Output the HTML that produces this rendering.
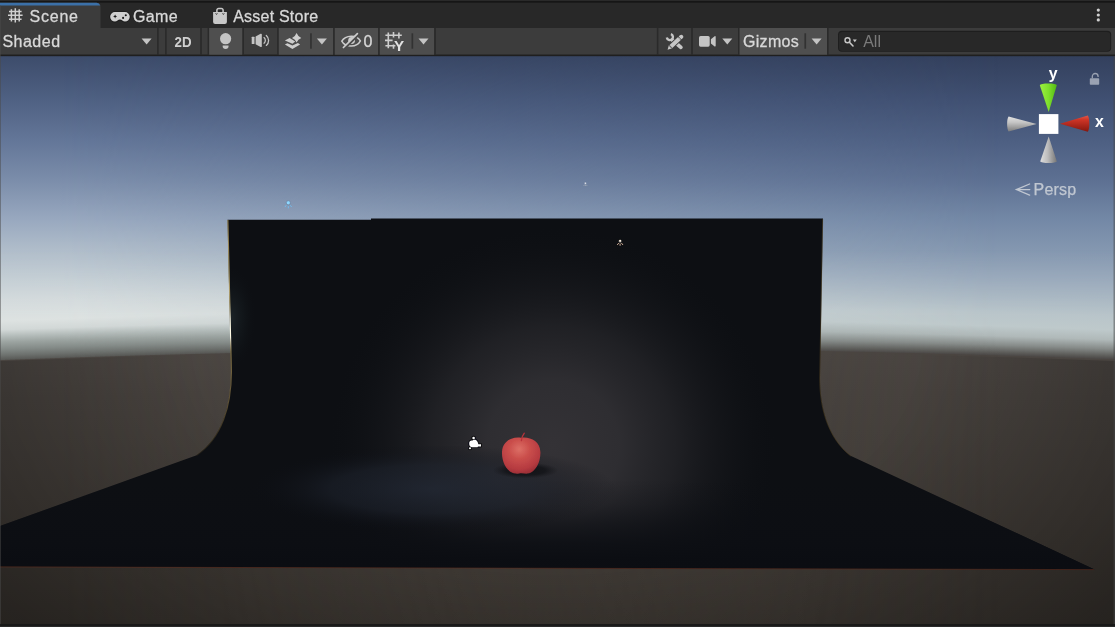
<!DOCTYPE html>
<html><head><meta charset="utf-8">
<style>
html,body{margin:0;padding:0;background:#282828;}
body{width:1115px;height:627px;overflow:hidden;position:relative;font-family:"Liberation Sans",sans-serif;}
</style></head>
<body>
<svg width="1115" height="627" viewBox="0 0 1115 627" style="position:absolute;left:0;top:0;will-change:transform">
<defs>
<linearGradient id="skyL" x1="0" y1="0" x2="0" y2="700" gradientUnits="userSpaceOnUse"><stop offset="0.0571" stop-color="#394866"/><stop offset="0.0800" stop-color="#3d4c6b"/><stop offset="0.1429" stop-color="#4f6183"/><stop offset="0.2000" stop-color="#637698"/><stop offset="0.2571" stop-color="#7b8daa"/><stop offset="0.3129" stop-color="#98a8bf"/><stop offset="0.3571" stop-color="#b0bdca"/><stop offset="0.4000" stop-color="#c5cfd5"/><stop offset="0.4286" stop-color="#d3dadc"/><stop offset="0.4586" stop-color="#dde2e1"/><stop offset="0.4714" stop-color="#d2d8d7"/><stop offset="0.4806" stop-color="#b4bcba"/><stop offset="0.4891" stop-color="#9ba3a0"/><stop offset="0.4991" stop-color="#848b88"/><stop offset="0.5077" stop-color="#6d716e"/><stop offset="0.5137" stop-color="#5a5b58"/><stop offset="0.5151" stop-color="#4b4642"/><stop offset="0.5714" stop-color="#47423e"/><stop offset="0.8143" stop-color="#3e3934"/><stop offset="0.8957" stop-color="#3b3631"/><stop offset="1.0000" stop-color="#37322d"/></linearGradient>
<linearGradient id="skyR" x1="0" y1="0" x2="0" y2="700" gradientUnits="userSpaceOnUse"><stop offset="0.0571" stop-color="#2f3b57"/><stop offset="0.0800" stop-color="#33405d"/><stop offset="0.1429" stop-color="#405072"/><stop offset="0.2000" stop-color="#4d5f82"/><stop offset="0.2571" stop-color="#5d7092"/><stop offset="0.3129" stop-color="#7388a6"/><stop offset="0.3571" stop-color="#8497b0"/><stop offset="0.4000" stop-color="#9aaabc"/><stop offset="0.4286" stop-color="#aab8c3"/><stop offset="0.4543" stop-color="#b9c5ca"/><stop offset="0.4729" stop-color="#bec9cb"/><stop offset="0.4871" stop-color="#b0b9b9"/><stop offset="0.5000" stop-color="#878c8a"/><stop offset="0.5100" stop-color="#5e5e5b"/><stop offset="0.5143" stop-color="#4d4a48"/><stop offset="0.5154" stop-color="#4a4541"/><stop offset="0.5714" stop-color="#47423e"/><stop offset="0.8143" stop-color="#3e3934"/><stop offset="0.8957" stop-color="#3b3631"/><stop offset="1.0000" stop-color="#37322d"/></linearGradient>
<linearGradient id="mk" x1="60" y1="0" x2="1000" y2="0" gradientUnits="userSpaceOnUse"><stop offset="0" stop-color="#fff"/><stop offset="1" stop-color="#000"/></linearGradient>
<linearGradient id="vmk" x1="0" y1="250" x2="0" y2="315" gradientUnits="userSpaceOnUse"><stop offset="0" stop-color="#000"/><stop offset="1" stop-color="#fff"/></linearGradient>
<mask id="vm" maskUnits="userSpaceOnUse" x="0" y="0" width="1115" height="700"><rect x="0" y="0" width="1115" height="700" fill="url(#vmk)"/></mask>
<mask id="lm" maskUnits="userSpaceOnUse" x="0" y="0" width="1115" height="700"><rect x="0" y="0" width="1115" height="700" fill="url(#mk)"/></mask>
<radialGradient id="gd" cx="0" cy="0" r="1.3" gradientUnits="userSpaceOnUse" gradientTransform="translate(557 340) scale(700 430)"><stop offset="0.4" stop-color="#000" stop-opacity="0"/><stop offset="0.54" stop-color="#000" stop-opacity="0.12"/><stop offset="0.69" stop-color="#000" stop-opacity="0.26"/><stop offset="0.77" stop-color="#000" stop-opacity="0.34"/><stop offset="1" stop-color="#000" stop-opacity="0.45"/></radialGradient>
<radialGradient id="wallglow" cx="0" cy="0" r="1" gradientUnits="userSpaceOnUse" gradientTransform="translate(553 446) scale(222 218)">
<stop offset="0" stop-color="#343236" stop-opacity="1"/><stop offset="0.3" stop-color="#302f33" stop-opacity="0.95"/><stop offset="0.55" stop-color="#27272b" stop-opacity="0.72"/><stop offset="0.8" stop-color="#1b1c20" stop-opacity="0.32"/><stop offset="1" stop-color="#101216" stop-opacity="0"/></radialGradient>
<radialGradient id="floorglow" cx="0" cy="0" r="1" gradientUnits="userSpaceOnUse" gradientTransform="translate(432 489) scale(185 44)">
<stop offset="0" stop-color="#222834" stop-opacity="0.8"/><stop offset="0.55" stop-color="#1d222c" stop-opacity="0.6"/><stop offset="1" stop-color="#0c0e14" stop-opacity="0"/></radialGradient>
<linearGradient id="fdark" x1="0" y1="480" x2="0" y2="560" gradientUnits="userSpaceOnUse"><stop offset="0" stop-color="#0c0e13" stop-opacity="0"/><stop offset="0.3" stop-color="#0c0e13" stop-opacity="0.25"/><stop offset="0.55" stop-color="#0c0e13" stop-opacity="0.6"/><stop offset="0.8" stop-color="#0c0e13" stop-opacity="0.88"/><stop offset="1" stop-color="#0b0d12" stop-opacity="0.97"/></linearGradient>
<linearGradient id="rimL" x1="0" y1="219" x2="0" y2="456" gradientUnits="userSpaceOnUse"><stop offset="0" stop-color="#b09858" stop-opacity="0.75"/><stop offset="0.35" stop-color="#c8b478" stop-opacity="0.85"/><stop offset="0.42" stop-color="#fffbe6" stop-opacity="1"/><stop offset="0.5" stop-color="#fffbe6" stop-opacity="1"/><stop offset="0.56" stop-color="#a89258" stop-opacity="0.8"/><stop offset="0.8" stop-color="#8a7444" stop-opacity="0.55"/><stop offset="1" stop-color="#6a5428" stop-opacity="0.2"/></linearGradient>
<radialGradient id="rimglow" cx="0.5" cy="0.5" r="0.5"><stop offset="0" stop-color="#222b2f" stop-opacity="0.7"/><stop offset="0.5" stop-color="#182024" stop-opacity="0.35"/><stop offset="1" stop-color="#0c0e12" stop-opacity="0"/></radialGradient>
<clipPath id="bd"><path d="M227.5 219.7 H371 V218.5 H823 L820 378 C820 408 828 438 851 456 L1094.6 569.4 L0 566.6 L0 526 L196 455.5 C222 438 231 405 231 372 Z"/></clipPath>
<clipPath id="sc"><rect x="0" y="56" width="1115" height="571"/></clipPath>
<linearGradient id="cg" x1="0" y1="0" x2="1" y2="0"><stop offset="0" stop-color="#9cf040"/><stop offset="0.5" stop-color="#7fe02c"/><stop offset="1" stop-color="#52b814"/></linearGradient>
<linearGradient id="cr" x1="0" y1="0" x2="0" y2="1"><stop offset="0" stop-color="#e0584a"/><stop offset="0.25" stop-color="#cf3527"/><stop offset="1" stop-color="#84170e"/></linearGradient>
<linearGradient id="cgl" x1="0" y1="0" x2="0" y2="1"><stop offset="0" stop-color="#e2e2e2"/><stop offset="0.4" stop-color="#c4c4c4"/><stop offset="1" stop-color="#7c7c7c"/></linearGradient>
<linearGradient id="cgb" x1="0" y1="0" x2="1" y2="0"><stop offset="0" stop-color="#dedede"/><stop offset="0.45" stop-color="#bcbcbc"/><stop offset="1" stop-color="#767676"/></linearGradient>
<radialGradient id="apg" cx="0.45" cy="0.32" r="0.75"><stop offset="0" stop-color="#dc6f66"/><stop offset="0.35" stop-color="#cb4f4c"/><stop offset="0.75" stop-color="#b53a40"/><stop offset="1" stop-color="#8f2a32"/></radialGradient>
<radialGradient id="shg" cx="0.5" cy="0.5" r="0.5"><stop offset="0" stop-color="#101114" stop-opacity="0.95"/><stop offset="0.6" stop-color="#121317" stop-opacity="0.8"/><stop offset="1" stop-color="#18181c" stop-opacity="0"/></radialGradient>
<filter id="b1" x="-20%" y="-20%" width="140%" height="140%"><feGaussianBlur stdDeviation="0.6"/></filter>
<filter id="b05" x="-20%" y="-20%" width="140%" height="140%"><feGaussianBlur stdDeviation="0.35"/></filter>
</defs>
<g clip-path="url(#sc)">
<rect x="0" y="40" width="1115" height="600" fill="url(#skyR)"/>
<rect x="0" y="40" width="1115" height="600" fill="url(#skyL)" mask="url(#lm)"/>
<g mask="url(#vm)">
<g fill="url(#skyR)" shape-rendering="crispEdges"><rect x="0" y="240" width="5" height="400" transform="translate(0 -0.10)"/><rect x="5" y="240" width="5" height="400" transform="translate(0 -0.29)"/><rect x="10" y="240" width="5" height="400" transform="translate(0 -0.47)"/><rect x="15" y="240" width="5" height="400" transform="translate(0 -0.66)"/><rect x="20" y="240" width="5" height="400" transform="translate(0 -0.85)"/><rect x="25" y="240" width="5" height="400" transform="translate(0 -1.03)"/><rect x="30" y="240" width="5" height="400" transform="translate(0 -1.21)"/><rect x="35" y="240" width="5" height="400" transform="translate(0 -1.39)"/><rect x="40" y="240" width="5" height="400" transform="translate(0 -1.57)"/><rect x="45" y="240" width="5" height="400" transform="translate(0 -1.75)"/><rect x="50" y="240" width="5" height="400" transform="translate(0 -1.92)"/><rect x="55" y="240" width="5" height="400" transform="translate(0 -2.10)"/><rect x="60" y="240" width="5" height="400" transform="translate(0 -2.27)"/><rect x="65" y="240" width="5" height="400" transform="translate(0 -2.44)"/><rect x="70" y="240" width="5" height="400" transform="translate(0 -2.60)"/><rect x="75" y="240" width="5" height="400" transform="translate(0 -2.77)"/><rect x="80" y="240" width="5" height="400" transform="translate(0 -2.93)"/><rect x="85" y="240" width="5" height="400" transform="translate(0 -3.10)"/><rect x="90" y="240" width="5" height="400" transform="translate(0 -3.26)"/><rect x="95" y="240" width="5" height="400" transform="translate(0 -3.42)"/><rect x="100" y="240" width="5" height="400" transform="translate(0 -3.58)"/><rect x="105" y="240" width="5" height="400" transform="translate(0 -3.73)"/><rect x="110" y="240" width="5" height="400" transform="translate(0 -3.89)"/><rect x="115" y="240" width="5" height="400" transform="translate(0 -4.04)"/><rect x="120" y="240" width="5" height="400" transform="translate(0 -4.19)"/><rect x="125" y="240" width="5" height="400" transform="translate(0 -4.34)"/><rect x="130" y="240" width="5" height="400" transform="translate(0 -4.49)"/><rect x="135" y="240" width="5" height="400" transform="translate(0 -4.63)"/><rect x="140" y="240" width="5" height="400" transform="translate(0 -4.77)"/><rect x="145" y="240" width="5" height="400" transform="translate(0 -4.92)"/><rect x="150" y="240" width="5" height="400" transform="translate(0 -5.06)"/><rect x="155" y="240" width="5" height="400" transform="translate(0 -5.20)"/><rect x="160" y="240" width="5" height="400" transform="translate(0 -5.33)"/><rect x="165" y="240" width="5" height="400" transform="translate(0 -5.47)"/><rect x="170" y="240" width="5" height="400" transform="translate(0 -5.60)"/><rect x="175" y="240" width="5" height="400" transform="translate(0 -5.73)"/><rect x="180" y="240" width="5" height="400" transform="translate(0 -5.86)"/><rect x="185" y="240" width="5" height="400" transform="translate(0 -5.99)"/><rect x="190" y="240" width="5" height="400" transform="translate(0 -6.12)"/><rect x="195" y="240" width="5" height="400" transform="translate(0 -6.24)"/><rect x="200" y="240" width="5" height="400" transform="translate(0 -6.37)"/><rect x="205" y="240" width="5" height="400" transform="translate(0 -6.49)"/><rect x="210" y="240" width="5" height="400" transform="translate(0 -6.61)"/><rect x="215" y="240" width="5" height="400" transform="translate(0 -6.72)"/><rect x="220" y="240" width="5" height="400" transform="translate(0 -6.84)"/><rect x="225" y="240" width="5" height="400" transform="translate(0 -6.96)"/><rect x="230" y="240" width="5" height="400" transform="translate(0 -7.07)"/><rect x="815" y="240" width="5" height="400" transform="translate(0 -9.36)"/><rect x="820" y="240" width="5" height="400" transform="translate(0 -9.27)"/><rect x="825" y="240" width="5" height="400" transform="translate(0 -9.18)"/><rect x="830" y="240" width="5" height="400" transform="translate(0 -9.08)"/><rect x="835" y="240" width="5" height="400" transform="translate(0 -8.99)"/><rect x="840" y="240" width="5" height="400" transform="translate(0 -8.89)"/><rect x="845" y="240" width="5" height="400" transform="translate(0 -8.79)"/><rect x="850" y="240" width="5" height="400" transform="translate(0 -8.69)"/><rect x="855" y="240" width="5" height="400" transform="translate(0 -8.59)"/><rect x="860" y="240" width="5" height="400" transform="translate(0 -8.48)"/><rect x="865" y="240" width="5" height="400" transform="translate(0 -8.37)"/><rect x="870" y="240" width="5" height="400" transform="translate(0 -8.27)"/><rect x="875" y="240" width="5" height="400" transform="translate(0 -8.16)"/><rect x="880" y="240" width="5" height="400" transform="translate(0 -8.05)"/><rect x="885" y="240" width="5" height="400" transform="translate(0 -7.93)"/><rect x="890" y="240" width="5" height="400" transform="translate(0 -7.82)"/><rect x="895" y="240" width="5" height="400" transform="translate(0 -7.70)"/><rect x="900" y="240" width="5" height="400" transform="translate(0 -7.58)"/><rect x="905" y="240" width="5" height="400" transform="translate(0 -7.46)"/><rect x="910" y="240" width="5" height="400" transform="translate(0 -7.34)"/><rect x="915" y="240" width="5" height="400" transform="translate(0 -7.22)"/><rect x="920" y="240" width="5" height="400" transform="translate(0 -7.09)"/><rect x="925" y="240" width="5" height="400" transform="translate(0 -6.97)"/><rect x="930" y="240" width="5" height="400" transform="translate(0 -6.84)"/><rect x="935" y="240" width="5" height="400" transform="translate(0 -6.71)"/><rect x="940" y="240" width="5" height="400" transform="translate(0 -6.57)"/><rect x="945" y="240" width="5" height="400" transform="translate(0 -6.44)"/><rect x="950" y="240" width="5" height="400" transform="translate(0 -6.31)"/><rect x="955" y="240" width="5" height="400" transform="translate(0 -6.17)"/><rect x="960" y="240" width="5" height="400" transform="translate(0 -6.03)"/><rect x="965" y="240" width="5" height="400" transform="translate(0 -5.89)"/><rect x="970" y="240" width="5" height="400" transform="translate(0 -5.75)"/><rect x="975" y="240" width="5" height="400" transform="translate(0 -5.60)"/><rect x="980" y="240" width="5" height="400" transform="translate(0 -5.46)"/><rect x="985" y="240" width="5" height="400" transform="translate(0 -5.31)"/><rect x="990" y="240" width="5" height="400" transform="translate(0 -5.16)"/><rect x="995" y="240" width="5" height="400" transform="translate(0 -5.01)"/><rect x="1000" y="240" width="5" height="400" transform="translate(0 -4.86)"/><rect x="1005" y="240" width="5" height="400" transform="translate(0 -4.70)"/><rect x="1010" y="240" width="5" height="400" transform="translate(0 -4.54)"/><rect x="1015" y="240" width="5" height="400" transform="translate(0 -4.39)"/><rect x="1020" y="240" width="5" height="400" transform="translate(0 -4.23)"/><rect x="1025" y="240" width="5" height="400" transform="translate(0 -4.07)"/><rect x="1030" y="240" width="5" height="400" transform="translate(0 -3.90)"/><rect x="1035" y="240" width="5" height="400" transform="translate(0 -3.74)"/><rect x="1040" y="240" width="5" height="400" transform="translate(0 -3.57)"/><rect x="1045" y="240" width="5" height="400" transform="translate(0 -3.40)"/><rect x="1050" y="240" width="5" height="400" transform="translate(0 -3.23)"/><rect x="1055" y="240" width="5" height="400" transform="translate(0 -3.06)"/><rect x="1060" y="240" width="5" height="400" transform="translate(0 -2.89)"/><rect x="1065" y="240" width="5" height="400" transform="translate(0 -2.71)"/><rect x="1070" y="240" width="5" height="400" transform="translate(0 -2.54)"/><rect x="1075" y="240" width="5" height="400" transform="translate(0 -2.36)"/><rect x="1080" y="240" width="5" height="400" transform="translate(0 -2.18)"/><rect x="1085" y="240" width="5" height="400" transform="translate(0 -1.99)"/><rect x="1090" y="240" width="5" height="400" transform="translate(0 -1.81)"/><rect x="1095" y="240" width="5" height="400" transform="translate(0 -1.62)"/><rect x="1100" y="240" width="5" height="400" transform="translate(0 -1.44)"/><rect x="1105" y="240" width="5" height="400" transform="translate(0 -1.25)"/><rect x="1110" y="240" width="5" height="400" transform="translate(0 -1.06)"/></g>
<g fill="url(#skyL)" shape-rendering="crispEdges" mask="url(#lm)"><rect x="0" y="240" width="5" height="400" transform="translate(0 -0.10)"/><rect x="5" y="240" width="5" height="400" transform="translate(0 -0.29)"/><rect x="10" y="240" width="5" height="400" transform="translate(0 -0.47)"/><rect x="15" y="240" width="5" height="400" transform="translate(0 -0.66)"/><rect x="20" y="240" width="5" height="400" transform="translate(0 -0.85)"/><rect x="25" y="240" width="5" height="400" transform="translate(0 -1.03)"/><rect x="30" y="240" width="5" height="400" transform="translate(0 -1.21)"/><rect x="35" y="240" width="5" height="400" transform="translate(0 -1.39)"/><rect x="40" y="240" width="5" height="400" transform="translate(0 -1.57)"/><rect x="45" y="240" width="5" height="400" transform="translate(0 -1.75)"/><rect x="50" y="240" width="5" height="400" transform="translate(0 -1.92)"/><rect x="55" y="240" width="5" height="400" transform="translate(0 -2.10)"/><rect x="60" y="240" width="5" height="400" transform="translate(0 -2.27)"/><rect x="65" y="240" width="5" height="400" transform="translate(0 -2.44)"/><rect x="70" y="240" width="5" height="400" transform="translate(0 -2.60)"/><rect x="75" y="240" width="5" height="400" transform="translate(0 -2.77)"/><rect x="80" y="240" width="5" height="400" transform="translate(0 -2.93)"/><rect x="85" y="240" width="5" height="400" transform="translate(0 -3.10)"/><rect x="90" y="240" width="5" height="400" transform="translate(0 -3.26)"/><rect x="95" y="240" width="5" height="400" transform="translate(0 -3.42)"/><rect x="100" y="240" width="5" height="400" transform="translate(0 -3.58)"/><rect x="105" y="240" width="5" height="400" transform="translate(0 -3.73)"/><rect x="110" y="240" width="5" height="400" transform="translate(0 -3.89)"/><rect x="115" y="240" width="5" height="400" transform="translate(0 -4.04)"/><rect x="120" y="240" width="5" height="400" transform="translate(0 -4.19)"/><rect x="125" y="240" width="5" height="400" transform="translate(0 -4.34)"/><rect x="130" y="240" width="5" height="400" transform="translate(0 -4.49)"/><rect x="135" y="240" width="5" height="400" transform="translate(0 -4.63)"/><rect x="140" y="240" width="5" height="400" transform="translate(0 -4.77)"/><rect x="145" y="240" width="5" height="400" transform="translate(0 -4.92)"/><rect x="150" y="240" width="5" height="400" transform="translate(0 -5.06)"/><rect x="155" y="240" width="5" height="400" transform="translate(0 -5.20)"/><rect x="160" y="240" width="5" height="400" transform="translate(0 -5.33)"/><rect x="165" y="240" width="5" height="400" transform="translate(0 -5.47)"/><rect x="170" y="240" width="5" height="400" transform="translate(0 -5.60)"/><rect x="175" y="240" width="5" height="400" transform="translate(0 -5.73)"/><rect x="180" y="240" width="5" height="400" transform="translate(0 -5.86)"/><rect x="185" y="240" width="5" height="400" transform="translate(0 -5.99)"/><rect x="190" y="240" width="5" height="400" transform="translate(0 -6.12)"/><rect x="195" y="240" width="5" height="400" transform="translate(0 -6.24)"/><rect x="200" y="240" width="5" height="400" transform="translate(0 -6.37)"/><rect x="205" y="240" width="5" height="400" transform="translate(0 -6.49)"/><rect x="210" y="240" width="5" height="400" transform="translate(0 -6.61)"/><rect x="215" y="240" width="5" height="400" transform="translate(0 -6.72)"/><rect x="220" y="240" width="5" height="400" transform="translate(0 -6.84)"/><rect x="225" y="240" width="5" height="400" transform="translate(0 -6.96)"/><rect x="230" y="240" width="5" height="400" transform="translate(0 -7.07)"/><rect x="815" y="240" width="5" height="400" transform="translate(0 -9.36)"/><rect x="820" y="240" width="5" height="400" transform="translate(0 -9.27)"/><rect x="825" y="240" width="5" height="400" transform="translate(0 -9.18)"/><rect x="830" y="240" width="5" height="400" transform="translate(0 -9.08)"/><rect x="835" y="240" width="5" height="400" transform="translate(0 -8.99)"/><rect x="840" y="240" width="5" height="400" transform="translate(0 -8.89)"/><rect x="845" y="240" width="5" height="400" transform="translate(0 -8.79)"/><rect x="850" y="240" width="5" height="400" transform="translate(0 -8.69)"/><rect x="855" y="240" width="5" height="400" transform="translate(0 -8.59)"/><rect x="860" y="240" width="5" height="400" transform="translate(0 -8.48)"/><rect x="865" y="240" width="5" height="400" transform="translate(0 -8.37)"/><rect x="870" y="240" width="5" height="400" transform="translate(0 -8.27)"/><rect x="875" y="240" width="5" height="400" transform="translate(0 -8.16)"/><rect x="880" y="240" width="5" height="400" transform="translate(0 -8.05)"/><rect x="885" y="240" width="5" height="400" transform="translate(0 -7.93)"/><rect x="890" y="240" width="5" height="400" transform="translate(0 -7.82)"/><rect x="895" y="240" width="5" height="400" transform="translate(0 -7.70)"/><rect x="900" y="240" width="5" height="400" transform="translate(0 -7.58)"/><rect x="905" y="240" width="5" height="400" transform="translate(0 -7.46)"/><rect x="910" y="240" width="5" height="400" transform="translate(0 -7.34)"/><rect x="915" y="240" width="5" height="400" transform="translate(0 -7.22)"/><rect x="920" y="240" width="5" height="400" transform="translate(0 -7.09)"/><rect x="925" y="240" width="5" height="400" transform="translate(0 -6.97)"/><rect x="930" y="240" width="5" height="400" transform="translate(0 -6.84)"/><rect x="935" y="240" width="5" height="400" transform="translate(0 -6.71)"/><rect x="940" y="240" width="5" height="400" transform="translate(0 -6.57)"/><rect x="945" y="240" width="5" height="400" transform="translate(0 -6.44)"/><rect x="950" y="240" width="5" height="400" transform="translate(0 -6.31)"/><rect x="955" y="240" width="5" height="400" transform="translate(0 -6.17)"/><rect x="960" y="240" width="5" height="400" transform="translate(0 -6.03)"/><rect x="965" y="240" width="5" height="400" transform="translate(0 -5.89)"/><rect x="970" y="240" width="5" height="400" transform="translate(0 -5.75)"/><rect x="975" y="240" width="5" height="400" transform="translate(0 -5.60)"/><rect x="980" y="240" width="5" height="400" transform="translate(0 -5.46)"/><rect x="985" y="240" width="5" height="400" transform="translate(0 -5.31)"/><rect x="990" y="240" width="5" height="400" transform="translate(0 -5.16)"/><rect x="995" y="240" width="5" height="400" transform="translate(0 -5.01)"/><rect x="1000" y="240" width="5" height="400" transform="translate(0 -4.86)"/><rect x="1005" y="240" width="5" height="400" transform="translate(0 -4.70)"/><rect x="1010" y="240" width="5" height="400" transform="translate(0 -4.54)"/><rect x="1015" y="240" width="5" height="400" transform="translate(0 -4.39)"/><rect x="1020" y="240" width="5" height="400" transform="translate(0 -4.23)"/><rect x="1025" y="240" width="5" height="400" transform="translate(0 -4.07)"/><rect x="1030" y="240" width="5" height="400" transform="translate(0 -3.90)"/><rect x="1035" y="240" width="5" height="400" transform="translate(0 -3.74)"/><rect x="1040" y="240" width="5" height="400" transform="translate(0 -3.57)"/><rect x="1045" y="240" width="5" height="400" transform="translate(0 -3.40)"/><rect x="1050" y="240" width="5" height="400" transform="translate(0 -3.23)"/><rect x="1055" y="240" width="5" height="400" transform="translate(0 -3.06)"/><rect x="1060" y="240" width="5" height="400" transform="translate(0 -2.89)"/><rect x="1065" y="240" width="5" height="400" transform="translate(0 -2.71)"/><rect x="1070" y="240" width="5" height="400" transform="translate(0 -2.54)"/><rect x="1075" y="240" width="5" height="400" transform="translate(0 -2.36)"/><rect x="1080" y="240" width="5" height="400" transform="translate(0 -2.18)"/><rect x="1085" y="240" width="5" height="400" transform="translate(0 -1.99)"/><rect x="1090" y="240" width="5" height="400" transform="translate(0 -1.81)"/><rect x="1095" y="240" width="5" height="400" transform="translate(0 -1.62)"/><rect x="1100" y="240" width="5" height="400" transform="translate(0 -1.44)"/><rect x="1105" y="240" width="5" height="400" transform="translate(0 -1.25)"/><rect x="1110" y="240" width="5" height="400" transform="translate(0 -1.06)"/></g>
</g>
<path d="M0 361 Q557 339.6 1115 361 V627 H0 Z" fill="url(#gd)"/>
<path d="M227.5 219.7 H371 V218.5 H823 L820 378 C820 408 828 438 851 456 L1094.6 569.4 L0 566.6 L0 526 L196 455.5 C222 438 231 405 231 372 Z" fill="#0d0f13"/>
<g clip-path="url(#bd)">
<rect x="0" y="200" width="1115" height="400" fill="url(#wallglow)"/>
<rect x="0" y="440" width="1115" height="140" fill="url(#fdark)"/>
<rect x="0" y="200" width="1115" height="400" fill="url(#floorglow)"/>
</g>
<ellipse cx="231" cy="318" rx="26" ry="55" fill="url(#rimglow)" clip-path="url(#bd)"/>
<path d="M227.9 220 L231.4 372 C231.4 405 222.4 438 196.4 455.5" stroke="url(#rimL)" stroke-width="1.1" fill="none"/>
<path d="M822.7 219 L819.7 378 C819.7 408 827.7 438 850.7 456" stroke="#6a5428" stroke-width="0.9" fill="none" opacity="0.45"/>
<path d="M0 566.9 L1094 569.6" stroke="#5a2a1c" stroke-width="0.8" fill="none" opacity="0.8"/>
<!-- apple -->
<ellipse cx="525.5" cy="470.4" rx="33" ry="8" fill="url(#shg)"/>
<g filter="url(#b05)">
<path d="M521 437.8 C512 436.5 502.5 441 502 452 C501.6 462 507 472.5 515 473.6 C518 474 519.5 473.2 521.5 473.2 C523.5 473.2 525.5 474 528 473.6 C535.5 472.5 540.8 462 540.4 452 C540 441 530 436.5 521 437.8 Z" fill="url(#apg)"/>
<path d="M521.4 440.5 C521.8 437.5 522.8 435 524.3 433.2" stroke="#b8323a" stroke-width="1.3" fill="none" stroke-linecap="round"/>
</g>
<!-- camera gizmo icon -->
<g filter="url(#b05)">
<g fill="#0a0a0e" stroke="#0a0a0e" stroke-width="1.8" stroke-linejoin="round">
<circle cx="473.6" cy="438" r="1.3"/>
<path d="M469.2 443.5 C469 441 471 440 472.6 440.6 C473 439.4 476 439.2 477 441 C478 442.6 478.2 443.6 478.4 444.2 L481 444.2 L481 446.4 L478 446.6 L477.6 447.2 L471.8 447.2 C470 447 469.2 445.5 469.2 443.5 Z"/>
<circle cx="470" cy="448.3" r="1"/>
</g>
<g fill="#fff">
<circle cx="473.6" cy="438" r="1.3"/>
<path d="M469.2 443.5 C469 441 471 440 472.6 440.6 C473 439.4 476 439.2 477 441 C478 442.6 478.2 443.6 478.4 444.2 L481 444.2 L481 446.4 L478 446.6 L477.6 447.2 L471.8 447.2 C470 447 469.2 445.5 469.2 443.5 Z"/>
<circle cx="470" cy="448.3" r="1"/>
</g>
</g>
<!-- small light gizmos -->
<g filter="url(#b05)">
<circle cx="288.3" cy="202.8" r="2" fill="#8fd8ff" stroke="#5f7494" stroke-width="0.5"/>
<path d="M286.2 205.3 L285 207 M288.3 206.2 V208.4 M290.4 205.3 L291.6 207" stroke="#6fbdf0" stroke-width="0.9" fill="none"/>
<circle cx="585.4" cy="183.2" r="0.95" fill="#fff" stroke="#5a6e90" stroke-width="0.4"/>
<path d="M584.6 184.6 L583.8 185.8 M585.4 184.8 V186 M586.2 184.6 L587 185.8" stroke="#b4b8c0" stroke-width="0.6" fill="none"/>
<circle cx="620.1" cy="240.9" r="1.5" fill="#fff4e8" stroke="#000" stroke-width="0.5"/>
<path d="M618.8 243 L617.2 245 M620.1 243.6 V245.8 M621.4 243 L623 245" stroke="#c6a690" stroke-width="1" fill="none"/>
</g>
<!-- orientation gizmo -->
<path d="M1039.8 85.2 C1039.8 82.8 1056.8 82.8 1056.8 85.2 L1048.7 112 Z" fill="url(#cg)"/>
<path d="M1008.6 116.6 C1006.6 118.6 1006.6 129.4 1008.6 131.4 L1036.6 123.9 Z" fill="url(#cgl)"/>
<path d="M1087.8 115.6 C1089.8 117.6 1089.8 129.8 1087.8 131.8 L1060 123.8 Z" fill="url(#cr)"/>
<path d="M1040.3 161.2 C1040.3 163.6 1056.8 163.6 1056.8 161.2 L1048.7 136.5 Z" fill="url(#cgb)"/>
<rect x="1038.9" y="114.1" width="19.5" height="19.8" fill="#fff"/>
<text x="1048.7" y="79.3" font-size="15.8" font-weight="bold" fill="#fff" font-family="Liberation Sans, sans-serif">y</text>
<text x="1095" y="127.3" font-size="15.8" font-weight="bold" fill="#fff" font-family="Liberation Sans, sans-serif">x</text>
<g opacity="0.62">
<rect x="1089.8" y="78.3" width="9.4" height="6.5" rx="0.8" fill="#d6dae0"/>
<path d="M1092.3 78.3 V76.4 A2.9 2.9 0 0 1 1098.1 76.4 V77" stroke="#d6dae0" stroke-width="1.3" fill="none"/>
</g>
<g stroke="#c0c7d1" stroke-width="1.3" fill="none" stroke-linecap="round"><path d="M1029.6 184 L1016.4 189.6 L1029.6 195.2 M1016.4 189.6 L1029.8 189.6"/></g>
<text x="1033.6" y="194.6" font-size="16" fill="#c0c7d1" stroke="#c0c7d1" stroke-width="0.25" font-family="Liberation Sans, sans-serif" letter-spacing="0.2">Persp</text>
</g>
<rect x="0" y="0" width="1115" height="56" fill="#282828"/>
<rect x="0" y="0" width="1115" height="1" fill="#2a2a2a"/>
<rect x="0" y="1" width="1115" height="1.7" fill="#161616"/>
<path d="M0 28 V2.7 H96.5 A4 4 0 0 1 100.5 6.7 V28 Z" fill="#3c3c3c"/>
<path d="M0 2.7 H96.5 A4 4 0 0 1 100.3 5.4 H0 Z" fill="#3b70a8"/>
<rect x="0" y="28" width="1115" height="26.7" fill="#3c3c3c"/>
<rect x="0" y="54.7" width="1115" height="1.5" fill="#1f1f1f"/>
<!-- scene icon -->
<g stroke="#d0d0d0" stroke-width="1.5" fill="none">
<path d="M11.4 9.2 V21.6 M15.3 8.2 V22.6 M19.2 9.2 V21.6 M9 11.4 H21.6 M8 15.3 H22.6 M9 19.2 H21.6"/>
</g>
<text x="29.6" y="21.9" font-family="Liberation Sans, sans-serif" font-size="16" fill="#d8d8d8" stroke="#d8d8d8" stroke-width="0.3" letter-spacing="0.75">Scene</text>
<!-- game icon -->
<g>
<path d="M114.9 11.3 H125 A5.3 5.3 0 0 1 125 22.4 C122.6 22.4 121.6 20.4 119.95 20.4 C118.3 20.4 117.3 22.4 114.9 22.4 A5.3 5.3 0 0 1 114.9 11.3 Z" fill="#1b1b1b"/>
<path d="M114.9 12.1 H125 A4.6 4.6 0 0 1 125 21.6 C122.8 21.6 121.8 19.6 119.95 19.6 C118.1 19.6 117.1 21.6 114.9 21.6 A4.6 4.6 0 0 1 114.9 12.1 Z" fill="#cfcfcf"/>
<path d="M115.1 14.4 L115.7 15.8 L117.1 16.4 L115.7 17 L115.1 18.4 L114.5 17 L113.1 16.4 L114.5 15.8 Z" fill="#161616"/>
<circle cx="125.8" cy="15.2" r="1.05" fill="#161616"/><circle cx="123.1" cy="17.9" r="1.05" fill="#161616"/>
</g>
<text x="133" y="21.9" font-family="Liberation Sans, sans-serif" font-size="16" fill="#d8d8d8" stroke="#d8d8d8" stroke-width="0.3" letter-spacing="0.35">Game</text>
<!-- bag icon -->
<g>
<path d="M216.9 13 V10.2 A1.7 1.7 0 0 1 218.6 8.5 H221.4 A1.7 1.7 0 0 1 223.1 10.2 V13" stroke="#c8c8c8" stroke-width="1.5" fill="none"/>
<path d="M213.1 11.9 H226.9 V22 A2.1 2.1 0 0 1 224.8 24.1 H215.2 A2.1 2.1 0 0 1 213.1 22 Z" fill="#c8c8c8"/>
<path d="M215.6 13.2 L216.5 14.6 L217.4 13.2 M222.5 13.2 L223.4 14.6 L224.3 13.2" stroke="#444" stroke-width="0.9" fill="none"/>
</g>
<text x="233.2" y="21.9" font-family="Liberation Sans, sans-serif" font-size="16" fill="#d8d8d8" stroke="#d8d8d8" stroke-width="0.3" letter-spacing="0.22">Asset Store</text>
<!-- kebab -->
<circle cx="1098.3" cy="10.1" r="1.6" fill="#d0d0d0"/><circle cx="1098.3" cy="15" r="1.6" fill="#d0d0d0"/><circle cx="1098.3" cy="19.9" r="1.6" fill="#d0d0d0"/>
<!-- toolbar -->
<text x="2.4" y="47.2" font-family="Liberation Sans, sans-serif" font-size="16" fill="#d8d8d8" stroke="#d8d8d8" stroke-width="0.3" letter-spacing="0.5">Shaded</text>
<path d="M141.6 38.4 H151.6 L146.6 44.6 Z" fill="#c4c4c4"/>
<rect x="157.1" y="28" width="1.6" height="27" fill="#2a2a2a"/><rect x="165.1" y="28" width="1.6" height="27" fill="#2a2a2a"/><rect x="200.2" y="28" width="1.6" height="27" fill="#2a2a2a"/><rect x="207.6" y="28" width="1.6" height="27" fill="#2a2a2a"/>
<text transform="translate(174.6 46.7) scale(0.9 1)" font-family="Liberation Sans, sans-serif" font-size="14.8" font-weight="bold" fill="#d0d0d0">2D</text>
<rect x="209.2" y="28" width="33.2" height="26.7" fill="#4f4f4f"/>
<rect x="242.4" y="28" width="1.6" height="27" fill="#2a2a2a"/>
<circle cx="225.6" cy="38.7" r="5.6" fill="#c4c4c4"/>
<path d="M222.7 45.4 H228.5 V46.2 A2.9 2.7 0 0 1 222.7 46.2 Z" fill="#c4c4c4"/>
<rect x="277.2" y="28" width="1.6" height="27" fill="#2a2a2a"/>
<!-- audio -->
<g fill="#c4c4c4"><rect x="251.7" y="36.8" width="2.8" height="7.2" rx="0.5"/>
<path d="M255.6 36.6 L260.6 33.8 Q261.8 33.4 261.8 34.6 V46.2 Q261.8 47.4 260.6 47 L255.6 44.2 Z"/></g>
<g stroke="#c4c4c4" stroke-width="1.3" fill="none" stroke-linecap="round"><path d="M264 37.6 A3.6 3.6 0 0 1 264 43.2"/><path d="M266.3 35.4 A6.6 6.6 0 0 1 266.3 45.4"/></g>
<rect x="278.8" y="28" width="54.4" height="26.7" fill="#4d4d4d"/>
<rect x="333.2" y="28" width="1.6" height="27" fill="#2a2a2a"/>
<!-- fx -->
<g fill="#cdcdcd">
<path d="M284.9 40.5 L289.6 38.1 L295.2 41.6 L292.5 43.7 Z"/>
<path d="M284.9 44.4 L287.4 43.2 L292.4 45.5 L297.9 43.1 L300.1 44.5 L292.4 48.9 Z"/>
<path d="M296.6 32.4 Q297.9 36.7 302 37.9 Q297.9 39.1 296.6 43.2 Q295.3 39.1 291.4 37.9 Q295.3 36.7 296.6 32.4 Z" fill="#4d4d4d"/>
<path d="M296.6 33.1 Q297.9 36.7 301.3 37.9 Q297.9 39.1 296.6 42.5 Q295.3 39.1 292 37.9 Q295.3 36.7 296.6 33.1 Z"/>
</g>
<rect x="310.09999999999997" y="33.3" width="1.7" height="15.4" fill="#323232"/><path d="M316.9 38.4 H326.9 L321.9 44.6 Z" fill="#c4c4c4"/>
<rect x="334.8" y="28" width="43.4" height="26.7" fill="#4d4d4d"/>
<rect x="378.2" y="28" width="1.6" height="27" fill="#2a2a2a"/>
<!-- eye slash -->
<path d="M341.8 41.2 C345.4 34.6 357 34.4 360.4 40.9 C357 47.6 345.4 47.8 341.8 41.2 Z" stroke="#cdcdcd" stroke-width="1.5" fill="none"/>
<circle cx="351.6" cy="40.5" r="3.4" fill="#cdcdcd"/>
<path d="M345.2 47.9 L359.2 33.9" stroke="#4d4d4d" stroke-width="2.2" fill="none"/>
<path d="M343.4 47.5 L357.4 33.6" stroke="#cdcdcd" stroke-width="1.7" fill="none" stroke-linecap="round"/>
<text x="363.4" y="47.2" font-family="Liberation Sans, sans-serif" font-size="16" fill="#d8d8d8" stroke="#d8d8d8" stroke-width="0.3">0</text>
<rect x="379.8" y="28" width="54.4" height="26.7" fill="#4d4d4d"/>
<rect x="434.2" y="28" width="1.6" height="27" fill="#2a2a2a"/>
<!-- grid Y -->
<g stroke="#cdcdcd" stroke-width="1.6" fill="none">
<path d="M388.3 32.6 V48.3 M393.5 32 V37.6 M393.5 44.6 V48.7 M398.9 32.6 V38.4 M385.4 35.3 H401.8 M385 40.4 H392.6 M385.4 45.8 H395.4"/>
</g>
<text x="394.1" y="50.7" font-family="Liberation Sans, sans-serif" font-size="15.2" font-weight="bold" fill="#e2e2e2" stroke="#4d4d4d" stroke-width="1.6" paint-order="stroke">Y</text>
<rect x="411.5" y="33.3" width="1.7" height="15.4" fill="#323232"/><path d="M418.5 38.4 H428.5 L423.5 44.6 Z" fill="#c4c4c4"/>
<rect x="656.8" y="28" width="1.6" height="27" fill="#2a2a2a"/><rect x="691.2" y="28" width="1.6" height="27" fill="#2a2a2a"/><rect x="738" y="28" width="1.6" height="27" fill="#2a2a2a"/>
<!-- tools -->
<path d="M672.4 40 L680.9 47.4" stroke="#c6c6c6" stroke-width="3.7" stroke-linecap="round" fill="none"/>
<path d="M670.9 34.1 A3.1 3.1 0 1 1 666.8 37.6" stroke="#c6c6c6" stroke-width="2.4" fill="none"/>
<path d="M668 49.4 L682.2 35.9" stroke="#3c3c3c" stroke-width="6" fill="none" stroke-linecap="round"/>
<path d="M671 46.4 L679.2 38.7" stroke="#c6c6c6" stroke-width="4.1" fill="none"/>
<path d="M680.5 37.5 L681.3 36.8" stroke="#c6c6c6" stroke-width="4.1" fill="none" stroke-linecap="round"/>
<path d="M667.6 49.7 L668.9 45 L672.4 48.3 Z" fill="#c6c6c6"/>
<path d="M668.9 45.3 L672.1 48.6 M678.4 36.6 L681.4 39.8" stroke="#3c3c3c" stroke-width="0.8" fill="none"/>
<!-- camera -->
<rect x="699" y="35.9" width="10.7" height="10.8" rx="1.6" fill="#c4c4c4"/>
<path d="M710.9 39.2 L714.6 36.2 Q715.7 35.8 715.7 37 V45.6 Q715.7 46.8 714.6 46.4 L710.9 43.4 Z" fill="#c4c4c4"/>
<path d="M722.3 38.4 H732.3 L727.3 44.6 Z" fill="#c4c4c4"/>
<rect x="739.6" y="28" width="87.4" height="26.7" fill="#4f4f4f"/>
<rect x="827" y="28" width="1.6" height="27" fill="#2a2a2a"/>
<text x="743" y="47.2" font-family="Liberation Sans, sans-serif" font-size="16" fill="#d8d8d8" stroke="#d8d8d8" stroke-width="0.3" letter-spacing="0.3">Gizmos</text>
<rect x="804.4000000000001" y="33.3" width="1.7" height="15.4" fill="#323232"/><path d="M811.6 38.4 H821.6 L816.6 44.6 Z" fill="#c4c4c4"/>
<!-- search -->
<rect x="838" y="30.8" width="273.2" height="21" rx="4" fill="#1e1e1e"/>
<rect x="838.9" y="32" width="271.4" height="19" rx="3.2" fill="#282828"/>
<circle cx="847.5" cy="40.3" r="2.5" stroke="#c8c8c8" stroke-width="1.4" fill="none"/>
<path d="M849.4 42.3 L853 46" stroke="#c8c8c8" stroke-width="1.6" stroke-linecap="round"/>
<path d="M852.8 39.6 H856.8 L854.8 42.2 Z" fill="#c8c8c8"/>
<text x="863.2" y="47.2" font-family="Liberation Sans, sans-serif" font-size="16" fill="#7a7a7a">All</text>

<rect x="0" y="5.4" width="1" height="622" fill="#4a4a4a" opacity="0.5"/>
<rect x="1113.5" y="56" width="1.5" height="571" fill="#454545" opacity="0.5"/>
<rect x="0" y="624.1" width="1115" height="1.8" fill="#181818"/>
<rect x="0" y="625.9" width="1115" height="1.1" fill="#2a2a2a"/>
</svg>
</body></html>
